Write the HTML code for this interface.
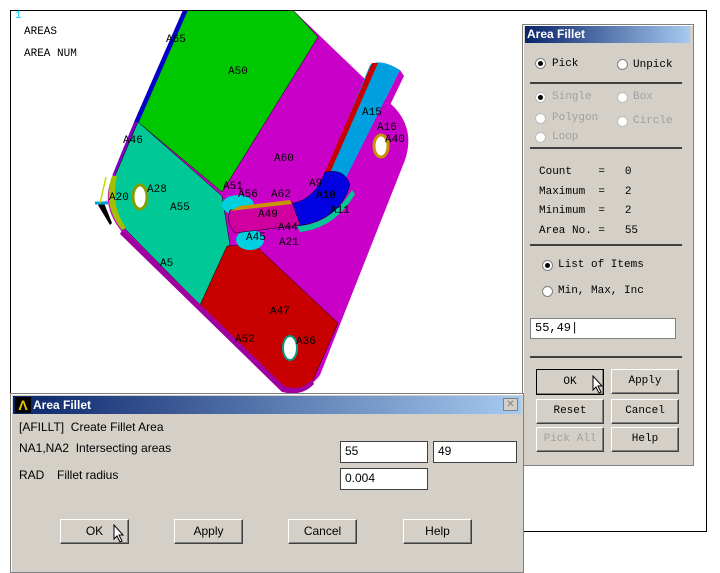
<!DOCTYPE html>
<html><head><style>
body{margin:0;width:720px;height:573px;background:#fff;position:relative;overflow:hidden;font-family:"Liberation Sans",sans-serif}
.abs{position:absolute}
.mono{font-family:"Liberation Mono",monospace;font-size:11px;color:#000}
.dlg{background:#d4d0c8;border:1px solid #808080;box-shadow:inset 1px 1px #fff}
.btn{position:absolute;background:#d4d0c8;border:1px solid;border-color:#fff #404040 #404040 #fff;box-shadow:inset -1px -1px #808080;text-align:center;box-sizing:border-box}
.inp{position:absolute;background:#fff;border:1px solid #404040;box-sizing:border-box;font-size:12px;padding:2px 4px}
.sep{position:absolute;height:2px;background:#404040;left:530px;width:152px}
.rad{position:absolute;width:9px;height:9px;border-radius:50%;background:#fff;border:1px solid #808080}
.rad.on::after{content:"";position:absolute;left:2px;top:2px;width:5px;height:5px;border-radius:50%;background:#000}
.dis{color:#a0a0a0}
</style></head><body>
<div class="abs" style="left:10px;top:10px;width:697px;height:522px;border:1px solid #000;box-sizing:border-box"></div>
<svg class="abs" style="left:0;top:0" width="720" height="573">
<defs><clipPath id="c"><rect x="11" y="11" width="696" height="521"/></clipPath></defs>
<g clip-path="url(#c)">
<!-- magenta plate -->
<path d="M293,10 L395,108 Q415,130 405,160 L320,375 Q305,395 285,390 L122,232 Q100,205 112,178 L184,10 Z" fill="#c800c8"/>
<polygon points="184,10 293,10 318,37 222,192 138,122" fill="#00c800" stroke="#000" stroke-width="0.5"/>
<polygon points="183,10 188,10 139,122 134,122" fill="#0000c8"/>
<polygon points="134,122 139,122 117,172 112,176" fill="#8000c0"/>
<path d="M138,122 L222,196 L230,245 L200,305 L126,230 Q108,205 115,176 Z" fill="#00c896" stroke="#000" stroke-width="0.5"/>
<path d="M227,246 L255,245 L338,323 L313,380 Q300,395 282,388 L200,305 Z" fill="#c80000" stroke="#000" stroke-width="0.5"/>
<path d="M122,230 L126,232 L284,386 Q300,392 312,380 L314,384 Q302,397 282,392 L120,234 Z" fill="#a000a0"/>
<path d="M112,176 Q102,205 122,230 L126,228 Q110,205 117,176 Z" fill="#a0c000"/>
<ellipse cx="140" cy="197" rx="7" ry="12" fill="#fff" stroke="#80a000" stroke-width="3"/>
<ellipse cx="290" cy="348" rx="7" ry="12" fill="#fff" stroke="#00a080" stroke-width="2"/>
<ellipse cx="381" cy="146" rx="7" ry="11" fill="#fff" stroke="#c89600" stroke-width="3"/>
<!-- pipe -->
<path d="M370,65 Q380,58 400,70 L345,180 L325,175 Z" fill="#00a0e0"/>
<path d="M372,63 L378,63 L330,173 L325,172 Z" fill="#c80000"/>
<path d="M400,70 L404,76 L352,184 L345,180 Z" fill="#c800c8"/>
<path d="M325,172 Q345,168 350,185 Q340,220 298,226 L290,204 Q315,200 325,172 Z" fill="#0000e0" stroke="#000" stroke-width="0.5"/>
<ellipse cx="238" cy="205" rx="16" ry="10" fill="#00d0e0"/>
<ellipse cx="250" cy="240" rx="14" ry="10" fill="#00d0e0"/>
<path d="M230,210 L292,202 L300,225 L235,233 Q225,222 230,210 Z" fill="#d000a0" stroke="#000" stroke-width="0.5"/>
<path d="M240,206 L290,200 L292,204 L230,211 Z" fill="#c89600"/>
<path d="M297,226 Q330,225 352,190 L355,194 Q335,228 300,232 Z" fill="#00c896"/>
<path d="M98,205 L108,200 L104,203 L112,223 L110,225 Z" fill="#000"/>
<line x1="95" y1="203" x2="108" y2="203" stroke="#00a0e0" stroke-width="3"/>
<line x1="106" y1="177" x2="100" y2="203" stroke="#c0e000" stroke-width="1.5"/>
</g>
<g font-family="Liberation Mono,monospace" font-size="11" fill="#000">
<text x="166" y="42">A65</text><text x="228" y="74">A50</text><text x="123" y="143">A46</text>
<text x="274" y="161">A60</text><text x="147" y="192">A28</text><text x="109" y="200">A20</text>
<text x="170" y="210">A55</text><text x="223" y="189">A51</text><text x="238" y="197">A56</text>
<text x="271" y="197">A62</text><text x="309" y="186">A9</text><text x="316" y="198">A10</text>
<text x="330" y="213">A11</text><text x="258" y="217">A49</text><text x="278" y="230">A44</text>
<text x="246" y="240">A45</text><text x="279" y="245">A21</text><text x="160" y="266">A5</text>
<text x="270" y="314">A47</text><text x="235" y="342">A52</text><text x="296" y="344">A36</text>
<text x="362" y="115">A15</text><text x="377" y="130">A16</text><text x="385" y="142">A40</text>
</g>
</svg>
<div class="abs" style="left:15px;top:10px;color:#00d0ff;font-size:11px;font-family:'Liberation Mono',monospace">1</div>
<div class="abs mono" style="left:24px;top:26px">AREAS</div>
<div class="abs mono" style="left:24px;top:48px">AREA NUM</div>

<!-- picker -->
<div class="abs dlg" style="left:522px;top:24px;width:170px;height:440px"></div>
<div class="abs" style="left:525px;top:26px;width:165px;height:17px;background:linear-gradient(90deg,#0a246a,#a6caf0);color:#fff;font-weight:bold;font-size:12px;line-height:17px;padding-left:2px;box-sizing:border-box">Area Fillet</div>
<div class="rad on" style="left:535px;top:58px"></div><div class="abs mono" style="left:552px;top:58px">Pick</div>
<div class="rad" style="left:617px;top:59px"></div><div class="abs mono" style="left:633px;top:59px">Unpick</div>
<div class="sep" style="top:82px"></div>
<div class="rad on" style="left:535px;top:92px;border-color:#bbb"></div><div class="abs mono dis" style="left:552px;top:91px">Single</div>
<div class="rad" style="left:617px;top:92px;border-color:#bbb"></div><div class="abs mono dis" style="left:633px;top:91px">Box</div>
<div class="rad" style="left:535px;top:113px;border-color:#bbb"></div><div class="abs mono dis" style="left:552px;top:112px">Polygon</div>
<div class="rad" style="left:617px;top:116px;border-color:#bbb"></div><div class="abs mono dis" style="left:633px;top:115px">Circle</div>
<div class="rad" style="left:535px;top:132px;border-color:#bbb"></div><div class="abs mono dis" style="left:552px;top:131px">Loop</div>
<div class="sep" style="top:147px"></div>
<div class="abs mono" style="left:539px;top:163px;white-space:pre;line-height:19.5px">Count    =   0
Maximum  =   2
Minimum  =   2
Area No. =   55</div>
<div class="sep" style="top:244px"></div>
<div class="rad on" style="left:542px;top:260px"></div><div class="abs mono" style="left:558px;top:259px">List of Items</div>
<div class="rad" style="left:542px;top:286px"></div><div class="abs mono" style="left:558px;top:285px">Min, Max, Inc</div>
<div class="inp mono" style="left:530px;top:318px;width:146px;height:21px;border-color:#808080">55,49|</div>
<div class="sep" style="top:356px"></div>
<div class="btn mono" style="left:536px;top:369px;width:68px;height:26px;line-height:24px;border:1px solid #000">OK</div>
<div class="btn mono" style="left:611px;top:369px;width:68px;height:25px;line-height:23px">Apply</div>
<div class="btn mono" style="left:536px;top:399px;width:68px;height:25px;line-height:23px">Reset</div>
<div class="btn mono" style="left:611px;top:399px;width:68px;height:25px;line-height:23px">Cancel</div>
<div class="btn mono dis" style="left:536px;top:427px;width:68px;height:25px;line-height:23px">Pick All</div>
<div class="btn mono" style="left:611px;top:427px;width:68px;height:25px;line-height:23px">Help</div>

<!-- bottom dialog -->
<div class="abs dlg" style="left:10px;top:393px;width:512px;height:178px"></div>
<div class="abs" style="left:13px;top:396px;width:508px;height:18px;background:linear-gradient(90deg,#0a246a,#a6caf0);color:#fff;font-weight:bold;font-size:12px;line-height:18px"><span style="display:inline-block;width:16px;height:16px;background:#000;color:#e8c000;text-align:center;margin:1px 2px 0 2px;vertical-align:top;line-height:16px;font-size:14px">Λ</span>Area Fillet</div>
<div class="abs" style="left:503px;top:398px;width:15px;height:13px;background:#d4d0c8;border:1px solid #808080;box-sizing:border-box;font-size:10px;text-align:center;line-height:11px;color:#808080">✕</div>
<div class="abs" style="left:19px;top:420px;font-size:12px">[AFILLT]&nbsp; Create Fillet Area</div>
<div class="abs" style="left:19px;top:441px;font-size:12px">NA1,NA2&nbsp; Intersecting areas</div>
<div class="abs" style="left:19px;top:468px;font-size:12px">RAD</div>
<div class="abs" style="left:57px;top:468px;font-size:12px">Fillet radius</div>
<div class="inp" style="left:340px;top:441px;width:88px;height:22px">55</div>
<div class="inp" style="left:433px;top:441px;width:84px;height:22px">49</div>
<div class="inp" style="left:340px;top:468px;width:88px;height:22px">0.004</div>
<div class="btn" style="left:60px;top:519px;width:69px;height:25px;line-height:23px;font-size:12px">OK</div>
<div class="btn" style="left:174px;top:519px;width:69px;height:25px;line-height:23px;font-size:12px">Apply</div>
<div class="btn" style="left:288px;top:519px;width:69px;height:25px;line-height:23px;font-size:12px">Cancel</div>
<div class="btn" style="left:403px;top:519px;width:69px;height:25px;line-height:23px;font-size:12px">Help</div>
<svg class="abs" style="left:113px;top:524px" width="14" height="20"><path d="M1,1 L1,15 L4,12 L7,18 L9,17 L6,11 L10,11 Z" fill="#fff" stroke="#000"/></svg>
<svg class="abs" style="left:592px;top:375px" width="14" height="20"><path d="M1,1 L1,15 L4,12 L7,18 L9,17 L6,11 L10,11 Z" fill="#fff" stroke="#000"/></svg>
</body></html>
